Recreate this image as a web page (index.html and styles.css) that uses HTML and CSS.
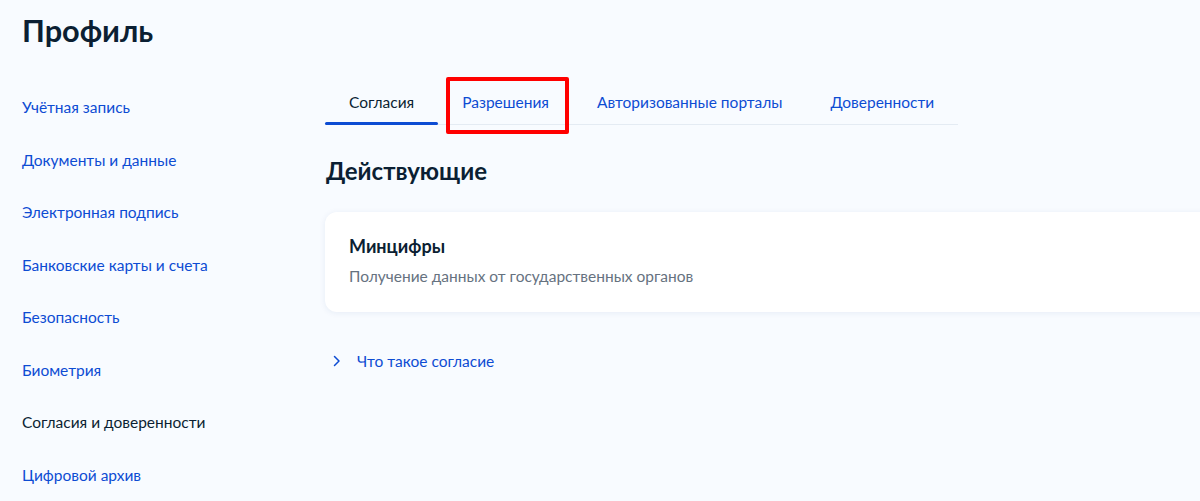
FILE: index.html
```html
<!DOCTYPE html>
<html lang="ru">
<head>
    <meta charset="UTF-8">
    <meta name="viewport" content="width=device-width, initial-scale=1.0">
    <title>Профиль</title>
    <link rel="stylesheet" href="styles.css">
</head>
<body>
<div class="page">
    <h1 class="page-title">Профиль</h1>
    <div class="layout">
        <nav class="sidebar">
            <a class="side-link" href="#">Учётная запись</a>
            <a class="side-link" href="#">Документы и данные</a>
            <a class="side-link" href="#">Электронная подпись</a>
            <a class="side-link" href="#">Банковские карты и счета</a>
            <a class="side-link" href="#">Безопасность</a>
            <a class="side-link" href="#">Биометрия</a>
            <a class="side-link active" href="#">Согласия и доверенности</a>
            <a class="side-link" href="#">Цифровой архив</a>
        </nav>

        <main class="content">
            <div class="tabs">
                <a class="tab active" href="#">Согласия</a>
                <a class="tab highlighted" href="#">Разрешения</a>
                <a class="tab" href="#">Авторизованные порталы</a>
                <a class="tab" href="#">Доверенности</a>
            </div>

            <h2 class="section-title">Действующие</h2>

            <div class="card">
                <div class="card-title">Минцифры</div>
                <div class="card-text">Получение данных от государственных органов</div>
            </div>

            <a class="more-link" href="#">
                <svg class="chevron" width="8" height="12" viewBox="0 0 8 12"><path d="M1.5 1.5 6 6l-4.5 4.5" fill="none" stroke="#0d4cd3" stroke-width="1.5" stroke-linecap="round" stroke-linejoin="round"/></svg>
                <span>Что такое согласие</span>
            </a>
        </main>
    </div>
</div>
</body>
</html>
```

FILE: styles.css
```css
html, body { margin: 0; padding: 0; }
body { font-family: Lato, "Noto Sans", sans-serif; background-color: #f8fbff; color: #0b1f33; overflow: hidden; }
a { text-decoration: none; color: #0d4cd3; }

.page { padding: 11px 0 0 22px; }
.page-title { font-size: 30.7px; font-weight: 700; line-height: 40px; margin: 0; }

.layout { display: flex; margin-top: 30px; }

.sidebar { width: 303px; flex-shrink: 0; display: flex; flex-direction: column; }
.side-link { font-size: 15.5px; line-height: 24px; height: 52.5px; padding-top: 14px; box-sizing: border-box; }
.side-link.active { color: #0b1f33; }

.content { width: 1000px; flex-shrink: 0; }

.tabs { display: inline-flex; border-bottom: 1px solid #e4ebf3; }
.tab { position: relative; font-size: 15.5px; line-height: 24px; padding: 9px 24px 10px; }
.tab.active { color: #0b1f33; }
.tab.active::after { content: ""; position: absolute; left: 0; right: 0; bottom: -1px; height: 3px; background: #0d4cd3; border-radius: 2px; }
.tab.highlighted::before { content: ""; position: absolute; left: 8px; right: 4px; top: -4px; bottom: -10px; border: 4px solid #ff0000; border-radius: 2px; }

.section-title { font-size: 24px; font-weight: 700; line-height: 32px; margin: 30px 0 0 1px; }

.card { margin-top: 25px; background: #fff; border-radius: 12px; padding: 22px 24px 24px; box-shadow: 0 1px 6px rgba(28, 70, 140, 0.08); }
.card-title { font-size: 18px; font-weight: 700; line-height: 24px; }
.card-text { font-size: 15.5px; line-height: 24px; color: #66727f; margin-top: 6px; }

.more-link { display: inline-flex; align-items: center; margin-top: 37px; margin-left: 8px; font-size: 15.5px; line-height: 24px; }
.chevron { margin-right: 16px; }
```
